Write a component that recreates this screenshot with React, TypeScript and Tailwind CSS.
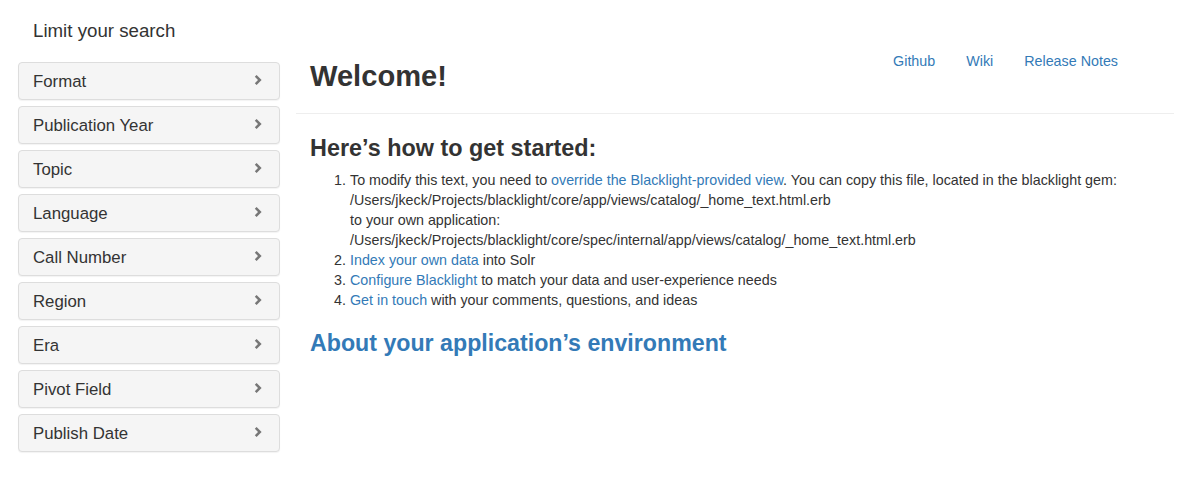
const facets = [
  'Format',
  'Publication Year',
  'Topic',
  'Language',
  'Call Number',
  'Region',
  'Era',
  'Pivot Field',
  'Publish Date',
];

function Chevron() {
  return (
    <svg width="8" height="10" viewBox="0 0 8 10" className="shrink-0 -mt-[4px]">
      <path d="M0.8 1.8 L2.6 0 L7.6 5 L2.6 10 L0.8 8.2 L4 5 Z" fill="#777" />
    </svg>
  );
}

function FacetPanel({ label }: { label: string }) {
  return (
    <div className="mb-[6px] h-[38px] rounded-[4px] border border-[#ddd] bg-[#f5f5f5] shadow-[0_1px_1px_rgba(0,0,0,0.05)] flex items-center justify-between pt-[2px] pl-[14px] pr-[17px]">
      <span className="text-[16.8px] leading-[20px] text-[#333]">{label}</span>
      <Chevron />
    </div>
  );
}

function A({ children }: { children: React.ReactNode }) {
  return <a href="#" className="text-[#337ab7] no-underline">{children}</a>;
}

export default function App() {
  return (
    <div
      className="min-h-screen bg-white text-[#333]"
      style={{ fontFamily: '"Liberation Sans", Arial, sans-serif' }}
    >
      <div className="mx-auto w-[1170px] flex">
        <aside className="w-[292px] shrink-0 pl-[14px] pr-[16px]">
          <h2 className="mt-[21px] mb-[21px] pl-[15px] text-[18.7px] leading-[20px] font-normal text-[#333]">
            Limit your search
          </h2>
          <div>
            {facets.map((f) => (
              <FacetPanel key={f} label={f} />
            ))}
          </div>
        </aside>

        <main className="flex-1">
          <div className="h-[114px] border-b border-[#eee] flex justify-between items-start pl-[14px] pr-[56px]">
            <h1 className="mt-[60px] text-[29.1px] leading-[33px] font-bold text-[#333]">Welcome!</h1>
            <nav className="mt-[51px] flex gap-[31px] text-[14.3px] leading-[20px]">
              <A>Github</A>
              <A>Wiki</A>
              <A>Release Notes</A>
            </nav>
          </div>

          <div className="pl-[14px]">
            <h2 className="mt-[21px] text-[23.4px] leading-[26px] font-bold text-[#333]">
              Here’s how to get started:
            </h2>
            <ol className="mt-[9px] list-decimal pl-[40px] text-[14.3px] leading-[20px]">
              <li>
                To modify this text, you need to <A>override the Blacklight-provided view</A>. You can copy this
                file, located in the blacklight gem:
                <br />
                /Users/jkeck/Projects/blacklight/core/app/views/catalog/_home_text.html.erb
                <br />
                to your own application:
                <br />
                /Users/jkeck/Projects/blacklight/core/spec/internal/app/views/catalog/_home_text.html.erb
              </li>
              <li>
                <A>Index your own data</A> into Solr
              </li>
              <li>
                <A>Configure Blacklight</A> to match your data and user-experience needs
              </li>
              <li>
                <A>Get in touch</A> with your comments, questions, and ideas
              </li>
            </ol>
            <h2 className="mt-[20px] text-[23.2px] leading-[26px] font-bold">
              <A>About your application’s environment</A>
            </h2>
          </div>
        </main>
      </div>
    </div>
  );
}
